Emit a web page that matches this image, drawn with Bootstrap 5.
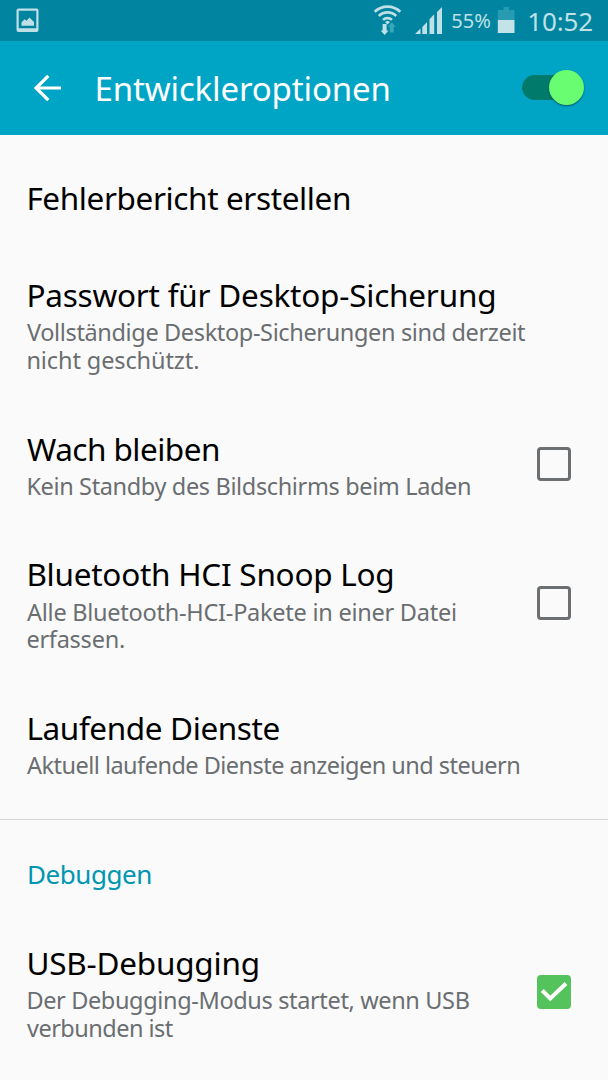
<!DOCTYPE html>
<html lang="de">
<head>
<meta charset="utf-8">
<meta name="viewport" content="width=device-width, initial-scale=1">
<title>Entwickleroptionen</title>
<link rel="stylesheet" href="https://cdn.jsdelivr.net/npm/bootstrap@5.3.0/dist/css/bootstrap.min.css">
<style>
  body { font-family: "Noto Sans", sans-serif; background: #fafafa; color: #000; height: 1080px; overflow: hidden; }
  svg { display: block; flex: none; }
  .status-bar { height: 41px; background: #00849f; color: #bfe0e7; padding: 0 15px 0 16px; }
  .status-pct { font-size: 20px; line-height: 41px; margin: 0 5.5px 0 6px; }
  .status-time { font-size: 26px; line-height: 41px; letter-spacing: -.15px; margin: 2px 0 0 10px; }
  .app-bar { height: 94px; background: #00a5c5; color: #fff; padding: 0 24px 0 33px; }
  .app-title { font-size: 33px; line-height: 92px; margin: 2px 0 0 31.5px; letter-spacing: -.14px; }
  .switch-track { width: 62px; height: 25px; border-radius: 13px; background: linear-gradient(90deg, #007a6b 80%, transparent 80%); margin-bottom: 1px; }
  .switch-knob { width: 35px; height: 35px; border-radius: 50%; background: #69fd72; box-shadow: 0 1px 2px rgba(0,60,70,.75); flex: none; }
  .options { padding: 14px 0 13.2px; }
  .options-divider { border-bottom: 1px solid #d5d5d5; }
  .option { padding: 25.8px 37px 25.8px 26.4px; }
  .option-title { font-size: 31.5px; line-height: 44px; letter-spacing: -.22px; white-space: nowrap; }
  .option-note { font-size: 23.5px; line-height: 27.8px; letter-spacing: -.36px; color: #6a6e71; margin-top: 2.3px; white-space: nowrap; }
  .single { line-height: 46.8px; }
  .nudge { padding-left: .6px; }
  .tight { letter-spacing: -.38px; }
  .tighter { letter-spacing: -.52px; }
  .soft { letter-spacing: -.25px; }
  .loose { letter-spacing: -.1px; }
  .tick-box { width: 34px; height: 34px; border: 3px solid #6c6f71; border-radius: 4px; flex: none; margin-top: 0; }
  .tick-box.ticked { border: 0; background: #54c35b; }
  .group-title { font-size: 26px; line-height: 81px; padding: 14px 0 0 27px; color: #0096b2; letter-spacing: -.45px; }
</style>
</head>
<body>
<header>
  <div class="status-bar d-flex align-items-center">
    <svg width="23" height="25" viewBox="0 0 23 25" fill="#bfe0e7"><path fill-rule="evenodd" d="M2.500.5h18a2 2 0 0 1 2 2v19.500a2 2 0 0 1-2 2h-18a2 2 0 0 1-2-2v-19.500a2 2 0 0 1 2-2zM2.700 2.700v17.500h17.600V2.700z"/><path d="M5.500 17.800v-3.300l3-3.200 2 1.500 3-3.300 4.500 4.500v3.800z"/></svg>
    <div class="d-flex align-items-center ms-auto">
      <svg width="30" height="41" viewBox="0 0 30 41" fill="none" stroke="#bfe0e7" stroke-width="2.700"><path d="M1.700 11.800a18.500 18.500 0 0 1 25.600 0M5.800 16a12.400 12.400 0 0 1 17.400 0M10 19.900a6.500 6.500 0 0 1 9 0"/><path fill="#bfe0e7" stroke="none" d="M12 22q2.500-2 5 0l-2.500 2.400zM9.600 24h4v6.500h2L11.600 35 7.600 30.500h2z"/><path fill="#39a7ba" stroke="none" d="M18.800 22.300l3.900 4.500h-2v5.700h-3.800v-5.700H15z"/></svg>
      <svg class="ms-2" width="34" height="41" viewBox="0 0 34 41" fill="#bfe0e7"><path d="M4 34l5.500-5.500V34zM11.300 27l4.700-5V34h-4.700zM18.500 19.300l4.700-5V34h-4.700zM26 12l5-5V34h-5z"/></svg>
      <span class="status-pct">55%</span>
      <svg width="21" height="41" viewBox="0 0 21 41"><path fill="#269bb1" d="M1.800 20V10h5.700V7h5.500V10H18.500V20z"/><path fill="#c3e3e9" d="M1.800 20h16.700v13H1.800z"/></svg>
      <span class="status-time">10:52</span>
    </div>
  </div>
  <nav class="app-bar d-flex align-items-center">
    <svg width="30" height="30" viewBox="0 0 30 30" fill="none" stroke="#fff" stroke-width="3.200"><path d="M28 15H3M15.300 2.800L3.100 15l12.200 12.200"/></svg>
    <span class="app-title">Entwickleroptionen</span>
    <div class="switch-track d-flex align-items-center justify-content-end ms-auto"><div class="switch-knob"></div></div>
  </nav>
</header>
<main>
  <section class="options options-divider">
    <div class="option"><div class="option-title single tight">Fehlerbericht erstellen</div></div>
    <div class="option">
      <div class="option-title">Passwort für Desktop-Sicherung</div>
      <div class="option-note"><div class="nudge">Vollständige Desktop-Sicherungen sind derzeit</div><div class="loose">nicht geschützt.</div></div>
    </div>
    <div class="option d-flex align-items-center justify-content-between">
      <div><div class="option-title tighter nudge">Wach bleiben</div><div class="option-note">Kein Standby des Bildschirms beim Laden</div></div>
      <div class="tick-box"></div>
    </div>
    <div class="option d-flex align-items-center justify-content-between">
      <div><div class="option-title soft">Bluetooth HCI Snoop Log</div><div class="option-note soft"><div class="nudge">Alle Bluetooth-HCI-Pakete in einer Datei</div><div>erfassen.</div></div></div>
      <div class="tick-box"></div>
    </div>
    <div class="option">
      <div class="option-title tight">Laufende Dienste</div>
      <div class="option-note tighter nudge">Aktuell laufende Dienste anzeigen und steuern</div>
    </div>
  </section>
  <section>
    <div class="group-title">Debuggen</div>
    <div class="option d-flex align-items-center justify-content-between">
      <div><div class="option-title">USB-Debugging</div><div class="option-note"><div>Der Debugging-Modus startet, wenn USB</div><div class="tighter nudge">verbunden ist</div></div></div>
      <div class="tick-box ticked"><svg width="34" height="34" viewBox="0 0 34 34" fill="none" stroke="#fff" stroke-width="4"><path d="M5.300 15.500l8 8L29 8.500"/></svg></div>
    </div>
  </section>
</main>
<script src="https://cdn.jsdelivr.net/npm/bootstrap@5.3.0/dist/js/bootstrap.bundle.min.js"></script>
</body>
</html>
